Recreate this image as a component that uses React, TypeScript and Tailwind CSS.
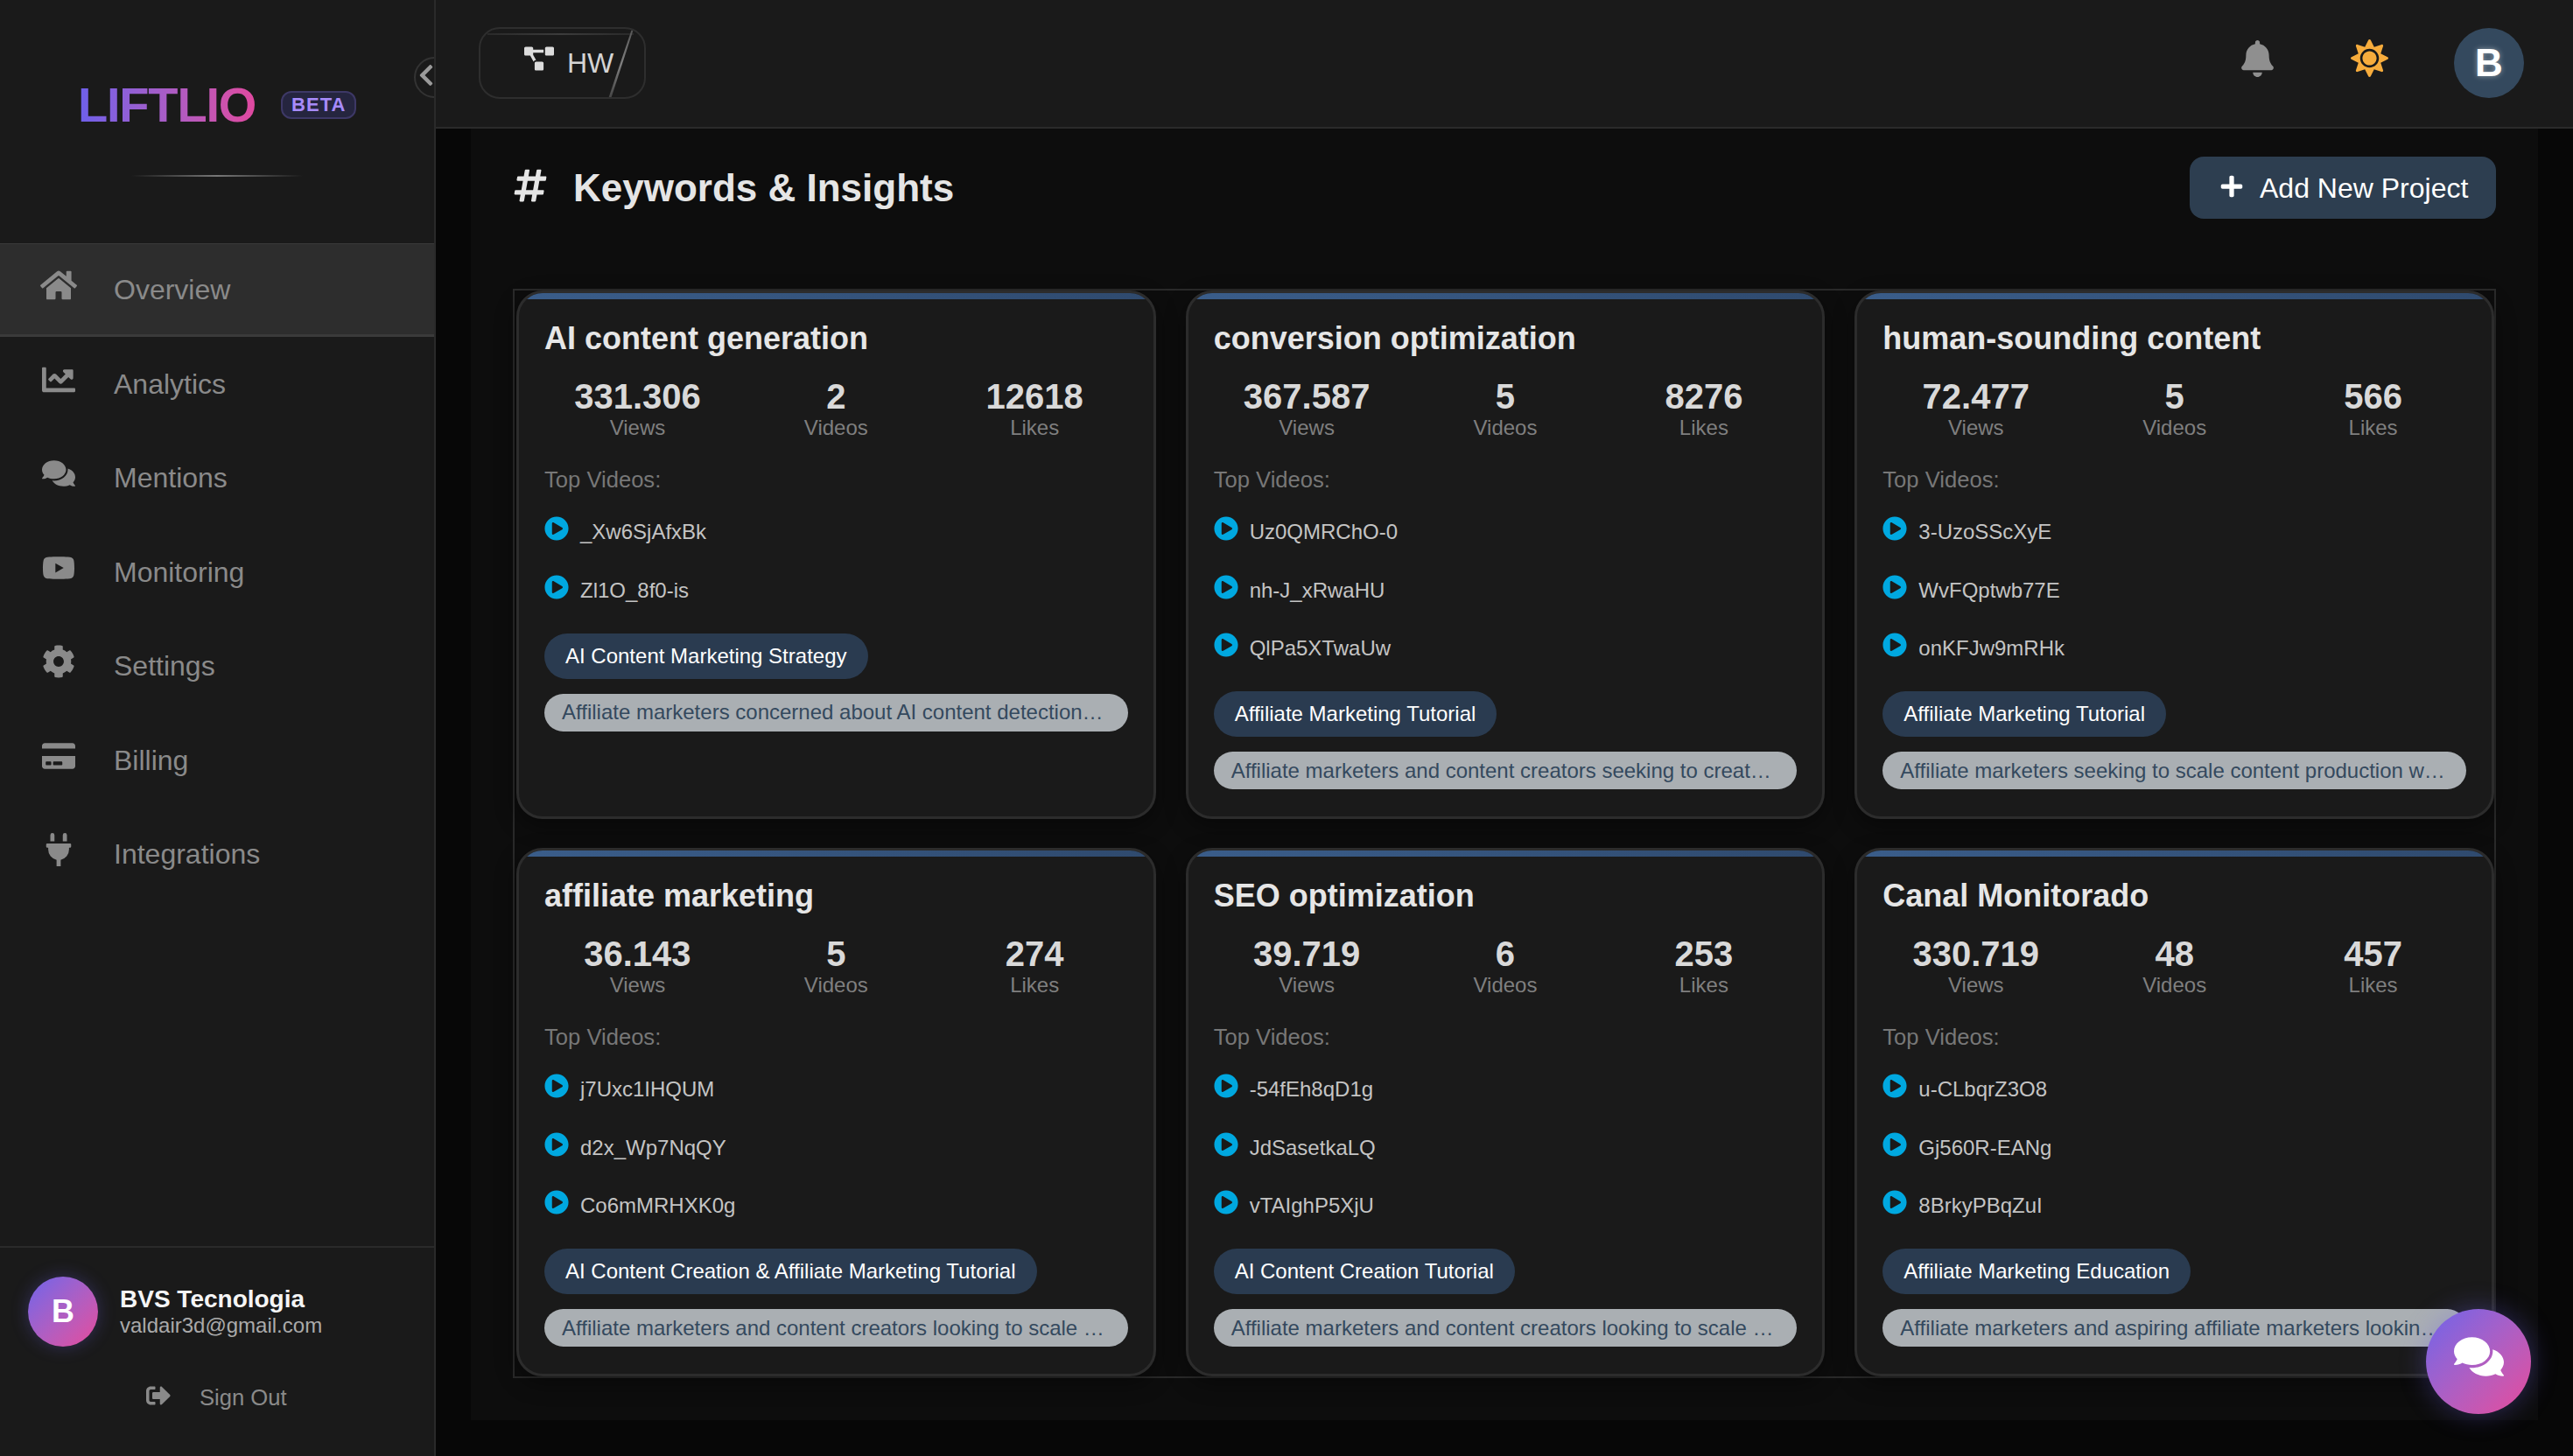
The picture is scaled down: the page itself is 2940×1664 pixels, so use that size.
import React from "react";
import {
  FaBell,
  FaChartLine,
  FaChevronLeft,
  FaCog,
  FaComments,
  FaCreditCard,
  FaHashtag,
  FaHome,
  FaPlayCircle,
  FaPlug,
  FaPlus,
  FaProjectDiagram,
  FaSignOutAlt,
  FaSun,
  FaYoutube,
} from "react-icons/fa";

const navItems = [
  { name: "Overview", icon: FaHome, size: "h-[42px] w-[42px]" },
  { name: "Analytics", icon: FaChartLine, size: "h-[38px] w-[38px]" },
  { name: "Mentions", icon: FaComments, size: "h-[38px] w-[38px]" },
  { name: "Monitoring", icon: FaYoutube, size: "h-[38px] w-[38px]" },
  { name: "Settings", icon: FaCog, size: "h-[38px] w-[38px]" },
  { name: "Billing", icon: FaCreditCard, size: "h-[38px] w-[38px]" },
  { name: "Integrations", icon: FaPlug, size: "h-[38px] w-[38px]" },
];

const projects = [
  {
    title: "AI content generation",
    views: "331.306",
    videos: "2",
    likes: "12618",
    top: ["_Xw6SjAfxBk", "Zl1O_8f0-is"],
    tag: "AI Content Marketing Strategy",
    audience: "Affiliate marketers concerned about AI content detection…",
  },
  {
    title: "conversion optimization",
    views: "367.587",
    videos: "5",
    likes: "8276",
    top: ["Uz0QMRChO-0", "nh-J_xRwaHU", "QlPa5XTwaUw"],
    tag: "Affiliate Marketing Tutorial",
    audience: "Affiliate marketers and content creators seeking to creat…",
  },
  {
    title: "human-sounding content",
    views: "72.477",
    videos: "5",
    likes: "566",
    top: ["3-UzoSScXyE", "WvFQptwb77E", "onKFJw9mRHk"],
    tag: "Affiliate Marketing Tutorial",
    audience: "Affiliate marketers seeking to scale content production w…",
  },
  {
    title: "affiliate marketing",
    views: "36.143",
    videos: "5",
    likes: "274",
    top: ["j7Uxc1IHQUM", "d2x_Wp7NqQY", "Co6mMRHXK0g"],
    tag: "AI Content Creation & Affiliate Marketing Tutorial",
    audience: "Affiliate marketers and content creators looking to scale …",
  },
  {
    title: "SEO optimization",
    views: "39.719",
    videos: "6",
    likes: "253",
    top: ["-54fEh8qD1g", "JdSasetkaLQ", "vTAIghP5XjU"],
    tag: "AI Content Creation Tutorial",
    audience: "Affiliate marketers and content creators looking to scale …",
  },
  {
    title: "Canal Monitorado",
    views: "330.719",
    videos: "48",
    likes: "457",
    top: ["u-CLbqrZ3O8", "Gj560R-EANg", "8BrkyPBqZuI"],
    tag: "Affiliate Marketing Education",
    audience: "Affiliate marketers and aspiring affiliate marketers lookin…",
  },
];

const Stat: React.FC<{ value: string; label: string }> = ({ value, label }) => (
  <div className="flex flex-col items-center">
    <span className="text-[40px] leading-[48px] font-bold text-[#d9d9d9]">{value}</span>
    <span className="text-[24px] leading-[24px] text-[#7f7f7f]">{label}</span>
  </div>
);

const ProjectCard: React.FC<{ project: (typeof projects)[number] }> = ({ project }) => (
  <div className="relative h-[604px] overflow-hidden rounded-[30px] border-[3px] border-[#2c2c2c] bg-[#1a1a1a] px-[29px] pt-[30px] shadow-[0_8px_24px_rgba(0,0,0,0.4)]">
    <div className="absolute left-0 right-0 top-0 h-[7px] bg-gradient-to-r from-[#3a5d8a] to-[#2f4a6e]" />
    <h3 className="text-[36px] leading-[44px] font-bold text-[#e6e6e6]">{project.title}</h3>
    <div className="mt-[20px] -mx-[7px] grid grid-cols-3">
      <Stat value={project.views} label="Views" />
      <Stat value={project.videos} label="Videos" />
      <Stat value={project.likes} label="Likes" />
    </div>
    <p className="mt-[32px] text-[25.6px] leading-[30px] text-[#777777]">Top Videos:</p>
    <div className="mt-[27px] flex flex-col gap-[30.7px]">
      {project.top.map((id) => (
        <div key={id} className="flex h-[36px] items-center gap-[13px]">
          <FaPlayCircle className="mb-2 h-[28px] w-[28px] text-[#00a8e0]" />
          <span className="text-[24px] text-[#c4c4c4]">{id}</span>
        </div>
      ))}
    </div>
    <div className="mt-[31px] flex">
      <span className="flex h-[52px] items-center rounded-full bg-[#2a3b50] px-[24px] text-[24px] text-white">
        {project.tag}
      </span>
    </div>
    <div className="mt-[17px] flex h-[43px] items-center rounded-full bg-[#aaafb3] px-[20px]">
      <span className="whitespace-nowrap text-[24px] text-[#34495e]">{project.audience}</span>
    </div>
  </div>
);

const Sidebar: React.FC = () => (
  <aside className="relative flex h-full w-[498px] shrink-0 flex-col overflow-hidden border-r-2 border-[#2a2a2a] bg-[#1a1a1a]">
    <div className="absolute -right-[24px] top-[65px] flex h-[47px] w-[47px] items-center rounded-full border-2 border-[#333333] bg-[#1a1a1a] pl-[3px] text-[#9a9a9a]">
      <FaChevronLeft className="mb-[6px] h-[28px] w-[18px]" />
    </div>

    {/* Logo */}
    <div className="flex h-[278px] flex-col">
      <div className="ml-[89px] mt-[86px] flex items-center gap-[29px]">
        <span className="bg-gradient-to-r from-[#6d5fea] to-[#e0489f] bg-clip-text text-[56px] leading-[68px] font-bold tracking-[-1.2px] text-transparent">
          LIFTLIO
        </span>
        <span className="rounded-[12px] border-2 border-[#3d3866] bg-[#25253f] px-[10px] text-[22px] leading-[28px] font-bold tracking-[1px] text-[#a78bfa]">
          BETA
        </span>
      </div>
      <div className="ml-[150px] mt-[46px] h-[2px] w-[196px] bg-gradient-to-r from-transparent via-[#777777] to-transparent" />
    </div>

    {/* Nav */}
    <nav className="flex flex-col">
      {navItems.map((item, i) => {
        const Icon = item.icon;
        return (
          <div
            key={item.name}
            className={`flex h-[107.4px] items-center pl-[48px] ${
              i === 0 ? "border-b-[3px] border-t border-[#3a3a3a] bg-[#2d2d2d]" : ""
            }`}
          >
            <span className="mb-[10px] flex w-[37px] justify-center">
              <Icon className={`${item.size} shrink-0 text-[#8a8a8a]`} />
            </span>
            <span className="ml-[45px] text-[32px] text-[#8a8a8a]">{item.name}</span>
          </div>
        );
      })}
    </nav>

    {/* User */}
    <div className="mt-auto h-[240px] border-t-2 border-[#2a2a2a]">
      <div className="ml-[32px] mt-[33px] flex items-center gap-[25px]">
        <div className="flex h-[80px] w-[80px] items-center justify-center rounded-full bg-gradient-to-br from-[#6d62ea] to-[#e6479b] text-[36px] font-bold text-white shadow-[0_0_20px_rgba(109,98,234,0.3)]">
          B
        </div>
        <div className="flex flex-col">
          <span className="text-[28px] leading-[32px] font-bold text-[#f5f5f5]">BVS Tecnologia</span>
          <span className="text-[24px] leading-[28px] text-[#aaaaaa]">valdair3d@gmail.com</span>
        </div>
      </div>
      <div className="ml-[167px] mt-[39px] flex items-center gap-[33px] text-[#8a8a8a]">
        <FaSignOutAlt className="mb-[4px] h-[28px] w-[28px]" />
        <span className="text-[25.6px]">Sign Out</span>
      </div>
    </div>
  </aside>
);

const Header: React.FC = () => (
  <header className="flex h-[147px] shrink-0 items-start border-b-2 border-[#2a2a2a] bg-[#1a1a1a]">
    <div className="relative ml-[49px] mt-[31px] flex h-[82px] w-[191px] items-center overflow-hidden rounded-[24px] border-2 border-[#2e2e2e] pl-[50px]">
      <div className="absolute left-[8px] right-[12px] top-[5px] h-[2px] bg-gradient-to-r from-[#2a2a2a] via-[#3c3c3c] to-[#2a2a2a]" />
      <FaProjectDiagram className="mb-[10px] h-[28px] w-[34px] text-[#dcdcdc]" />
      <span className="ml-[15px] text-[32px] text-[#d4d4d4]">HW</span>
      <svg className="absolute left-[146px] top-0 h-[80px] w-[30px]" viewBox="0 0 30 80">
        <defs>
          <linearGradient id="hwSlash" x1="0" y1="1" x2="0" y2="0">
            <stop offset="0" stopColor="#444444" />
            <stop offset="0.5" stopColor="#808080" />
            <stop offset="1" stopColor="#555555" />
          </linearGradient>
        </defs>
        <polygon points="27,0 29,0 3,80 0,80" fill="url(#hwSlash)" />
      </svg>
    </div>
    <div className="ml-auto mr-[56px] mt-[32px] flex items-start">
      <FaBell className="mt-[14px] h-[42px] w-[37px] text-[#8f8f8f]" />
      <FaSun className="ml-[88px] mt-[13px] h-[43px] w-[43px] text-[#f7ac3c]" />
      <div className="ml-[75px] flex h-[80px] w-[80px] items-center justify-center rounded-full bg-[#34495e] text-[44px] font-bold text-white [text-shadow:0_0_6px_rgba(255,255,255,0.45)]">
        B
      </div>
    </div>
  </header>
);

export default function App() {
  return (
    <div className="relative flex h-[1664px] w-[2940px] overflow-hidden bg-[#070707] font-['Liberation_Sans',Arial,sans-serif]">
      <Sidebar />
      <div className="flex min-w-0 flex-1 flex-col">
        <Header />
        <main className="mx-[40px] h-[1476px] bg-[#0d0d0d] pl-[48px] pr-[48px] pt-[32px]">
          <div className="flex h-[71px] items-center justify-between">
            <div className="flex items-center gap-[29px]">
              <FaHashtag className="mb-[6px] h-[42px] w-[40px] text-[#e5e5e5]" />
              <h1 className="text-[44px] font-bold text-[#e5e5e5]">Keywords &amp; Insights</h1>
            </div>
            <button className="flex h-[71px] w-[350px] items-center gap-[18px] rounded-[16px] bg-[#2d3e50] pl-[34px] text-[32px] text-white">
              <FaPlus className="mb-[4px] h-[28px] w-[28px]" />
              Add New Project
            </button>
          </div>
          <div className="mt-[80px] grid grid-cols-3 gap-x-[34px] gap-y-[33px] border-2 border-[#2a2a2a] pl-[2px]">
            {projects.map((p) => (
              <ProjectCard key={p.title} project={p} />
            ))}
          </div>
        </main>
      </div>
      <button className="absolute left-[2772px] top-[1496px] flex h-[120px] w-[120px] items-center justify-center rounded-full bg-gradient-to-br from-[#6d62ea] to-[#e6479b] text-white shadow-[0_0_30px_rgba(109,98,234,0.35)]">
        <FaComments className="mb-3 h-[57px] w-[57px]" />
      </button>
    </div>
  );
}
